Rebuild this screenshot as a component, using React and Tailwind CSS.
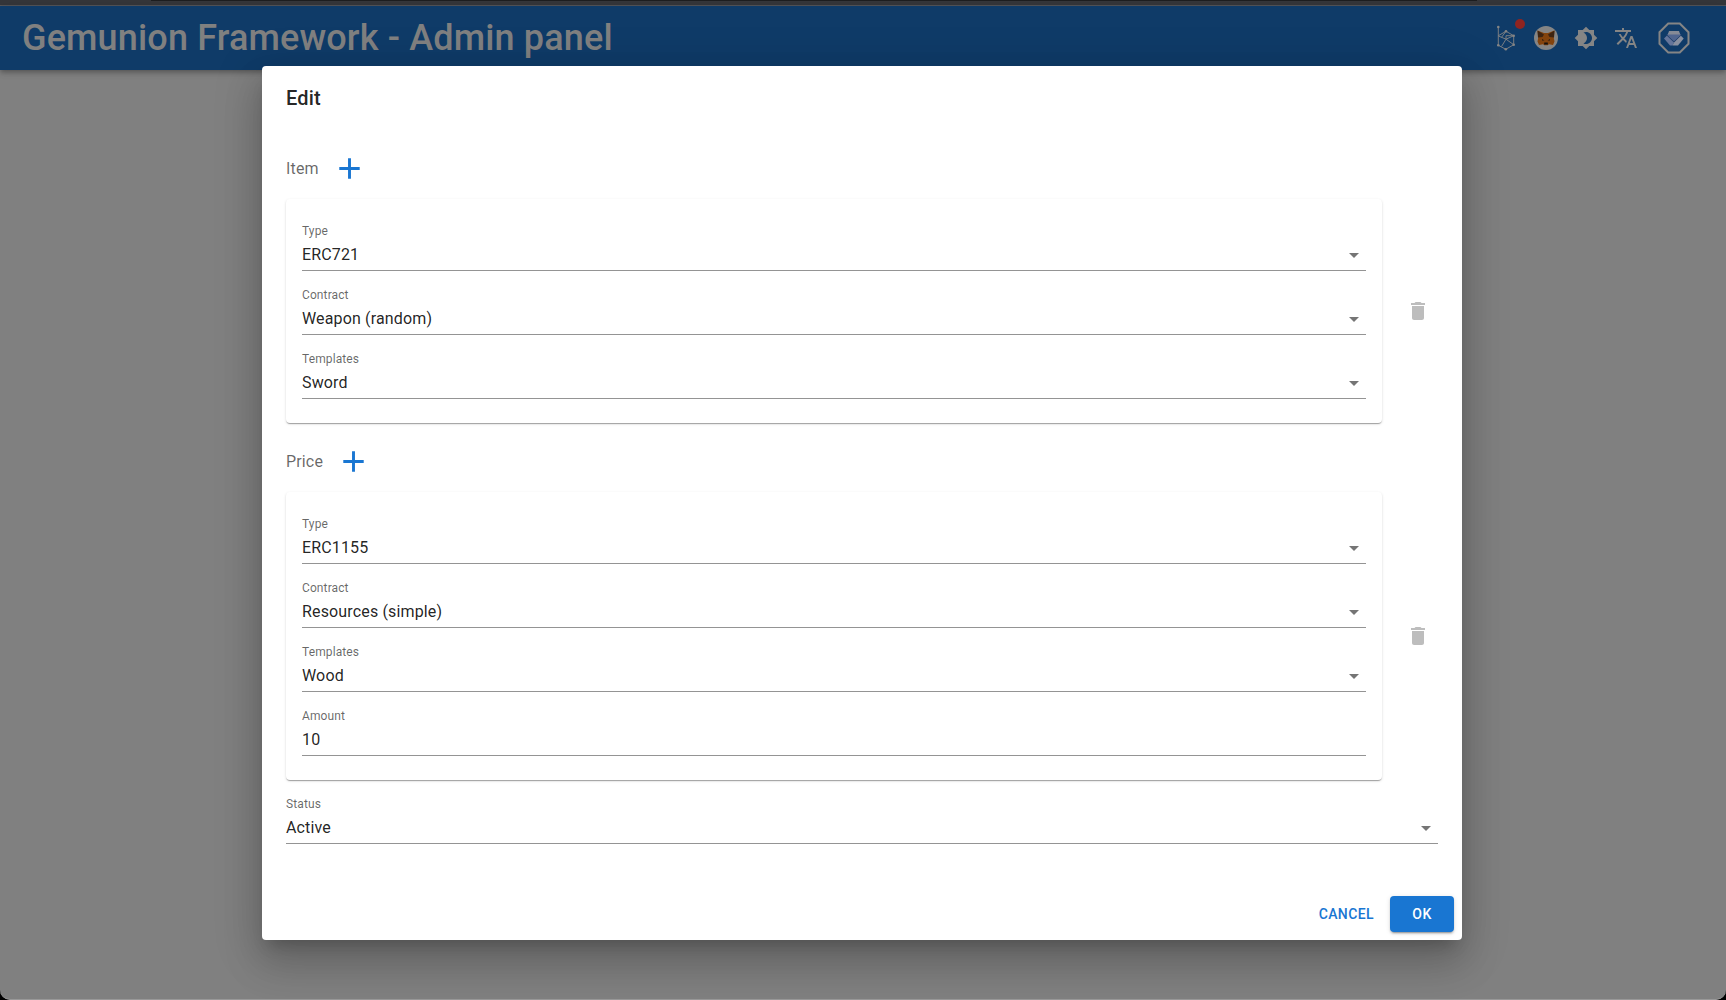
import React from "react";

function Field({ label, value, select = true }) {
  return (
    <div className="my-2 h-12 border-b border-[#949494]">
      <div className="h-4 text-[12px] leading-4 tracking-[0.11px] text-black/60">{label}</div>
      <div className="flex h-[31px] items-center justify-between">
        <span className="text-base leading-[23px] tracking-[0.15px] text-black/87">{value}</span>
        {select && (
          <svg viewBox="0 0 24 24" className="size-6 fill-black/54">
            <path d="m7 10 5 5 5-5z" />
          </svg>
        )}
      </div>
    </div>
  );
}

function Section({ title, fields, className }) {
  return (
    <section className={className}>
      <div className="flex h-[51px] items-center">
        <h3 className="text-base tracking-[0.15px] text-black/60">{title}</h3>
        <button className="ml-[5px] flex size-[51px] items-center justify-center">
          <svg viewBox="0 0 24 24" className="size-[35px] fill-[#1976d2]">
            <path d="M19 13h-6v6h-2v-6H5v-2h6V5h2v6h6z" />
          </svg>
        </button>
      </div>
      <div className="mt-[5px] flex items-center">
        <div className="flex w-[1096px] flex-col rounded bg-white p-4 shadow-[0_2px_1px_-1px_rgba(0,0,0,0.2),0_1px_1px_0_rgba(0,0,0,0.14),0_1px_3px_0_rgba(0,0,0,0.12)]">
          {fields.map((f) => (
            <Field key={f.label} {...f} />
          ))}
        </div>
        <button className="ml-4 flex size-10 items-center justify-center">
          <svg viewBox="0 0 24 24" className="size-6 fill-black/26">
            <path d="M6 19c0 1.100.9 2 2 2h8c1.100 0 2-.9 2-2V7H6zM19 4h-3.500l-1-1h-5l-1 1H5v2h14z" />
          </svg>
        </button>
      </div>
    </section>
  );
}

function NetworkIcon() {
  return (
    <svg viewBox="0 0 24 26" className="h-[26px] w-6" fill="none" stroke="#858585" strokeWidth="0.9">
      <path d="M4.300 2v18.300l7.500 4 7.900-4.600v-9L12 6.300l-7.700 4.400M4.500 11l7.500 3.200 7.700 5.500M7.500 21.500l4.500-7.300 7.700-3.500M12 6.300l-4.500 6M12 14.200v-3.500h7.700" />
      <g fill="#858585" stroke="none">
        <circle cx="4.300" cy="2" r="1.300" />
        <circle cx="4.300" cy="20.300" r="1.300" />
        <circle cx="11.800" cy="24.300" r="1.300" />
        <circle cx="19.700" cy="19.700" r="1.300" />
        <circle cx="19.700" cy="10.700" r="1.300" />
        <circle cx="12" cy="6.300" r="1.300" />
      </g>
    </svg>
  );
}

function FoxIcon() {
  return (
    <svg viewBox="0 0 24 24" className="size-6">
      <circle cx="12" cy="12" r="12" fill="#858585" />
      <path d="M3.500 4.500 10 7h4l6.500-2.500-.7 7.500.7 3.500-1.500 3.500-4-.8-1.300 1h-3.400l-1.300-1-4 .8-1.500-3.500.7-3.500z" fill="#83430d" />
      <path d="M3.500 4.500 10 8.500 8.500 11 4 11.500zM20.500 4.500 14 8.500l1.500 2.500 4.500.5z" fill="#3d2412" />
      <path d="m8 13 2.500 1.500L8 14.500zM16 13l-2.500 1.500 2.500 0z" fill="#241a12" />
      <path d="M10.300 16.500h3.400l.3 2h-4z" fill="#16120f" />
    </svg>
  );
}

function GemAvatar() {
  return (
    <svg viewBox="0 0 32 32" className="size-8">
      <path d="M10.200 1.500h11.600L30.500 10.200v11.600L21.800 30.500H10.200L1.500 21.800V10.200z" fill="none" stroke="#858585" strokeWidth="2" />
      <path d="M10.500 11h11l1.500 2-7 6.500L9 13z" fill="#50658f" />
      <path d="M11 9h10l1.200 3.500H9.800z" fill="#858a96" />
      <path d="m6 16.500 3-3 7 7-1.500 3H12z" fill="#65759a" />
      <path d="m25.700 16.500-3-3-6.700 7-1.500 3h5.500z" fill="#8990a0" />
      <path d="m8.800 13 7.200 7 7.200-7" fill="none" stroke="#2b4670" strokeWidth="1" />
    </svg>
  );
}

function Header() {
  return (
    <header className="flex h-16 items-center justify-between bg-[#0f3b68] pl-[22px] pr-9 shadow-[0_2px_4px_-1px_rgba(0,0,0,0.2),0_4px_5px_0_rgba(0,0,0,0.12),0_1px_10px_0_rgba(0,0,0,0.1)]">
      <h1 className="text-[36px] font-medium leading-[42px] tracking-[0.15px] text-[#808080]">Gemunion Framework - Admin panel</h1>
      <div className="flex items-center gap-4">
        <div className="relative">
          <NetworkIcon />
          <span className="absolute -right-[7px] -top-[6px] size-[10px] rounded-full bg-[#8f2420]" />
        </div>
        <FoxIcon />
        <svg viewBox="0 0 24 24" className="size-6 fill-[#858585]">
          <path d="M20 8.690V4h-4.690L12 .69 8.690 4H4v4.690L.69 12 4 15.310V20h4.690L12 23.310 15.310 20H20v-4.690L23.310 12zM12 18c-.89 0-1.740-.2-2.500-.55C11.560 16.500 13 14.420 13 12s-1.440-4.500-3.500-5.450C10.260 6.200 11.110 6 12 6c3.310 0 6 2.690 6 6s-2.690 6-6 6" />
        </svg>
        <svg viewBox="0 0 24 24" className="size-6 fill-[#858585]">
          <path d="m12.870 15.070-2.540-2.510.03-.03c1.740-1.940 2.980-4.170 3.710-6.530H17V4h-7V2H8v2H1v1.990h11.170C11.500 7.920 10.440 9.750 9 11.350 8.070 10.320 7.300 9.190 6.690 8h-2c.73 1.630 1.730 3.170 2.980 4.560l-5.090 5.020L4 19l5-5 3.110 3.110zM18.500 10h-2L12 22h2l1.120-3h4.750L21 22h2zm-2.620 7 1.620-4.330L19.120 17z" />
        </svg>
        <div className="ml-1">
          <GemAvatar />
        </div>
      </div>
    </header>
  );
}

const itemFields = [
  { label: "Type", value: "ERC721" },
  { label: "Contract", value: "Weapon (random)" },
  { label: "Templates", value: "Sword" },
];

const priceFields = [
  { label: "Type", value: "ERC1155" },
  { label: "Contract", value: "Resources (simple)" },
  { label: "Templates", value: "Wood" },
  { label: "Amount", value: "10", select: false },
];

export default function App() {
  return (
    <div className="relative h-[1000px] w-[1726px] overflow-hidden bg-black font-['Roboto',sans-serif]">
      <div className="h-full overflow-hidden rounded-b-[10px] border-b border-[#999999] bg-[#808080]">
        <div className="h-[6px] border-b border-[#55565a] bg-[#35363a]">
          <div className="ml-[151px] h-px w-[1326px] bg-[#1d1e20]" />
        </div>
        <Header />
      </div>
      <div className="absolute inset-0 flex items-start justify-center pr-[2px] pt-[66px]">
        <div
          role="dialog"
          className="flex h-[874px] w-[1200px] flex-col rounded bg-white shadow-[0_11px_15px_-7px_rgba(0,0,0,0.2),0_24px_38px_3px_rgba(0,0,0,0.14),0_9px_46px_8px_rgba(0,0,0,0.12)]"
        >
          <h2 className="px-6 py-4 text-xl font-medium leading-8 tracking-[0.15px] text-black/87">Edit</h2>
          <div className="flex-1 px-6 pt-[13px]">
            <Section title="Item" fields={itemFields} />
            <Section title="Price" fields={priceFields} className="mt-[13px]" />
            <div className="pt-2">
              <Field label="Status" value="Active" />
            </div>
          </div>
          <div className="flex items-center justify-end gap-2 p-2">
            <button className="px-2 py-[6px] text-sm font-medium uppercase leading-6 tracking-[0.4px] text-[#1976d2]">Cancel</button>
            <button className="h-9 w-16 rounded bg-[#1976d2] text-sm font-medium uppercase leading-6 tracking-[0.4px] text-white shadow-[0_3px_1px_-2px_rgba(0,0,0,0.2),0_2px_2px_0_rgba(0,0,0,0.14),0_1px_5px_0_rgba(0,0,0,0.12)]">
              Ok
            </button>
          </div>
        </div>
      </div>
    </div>
  );
}
